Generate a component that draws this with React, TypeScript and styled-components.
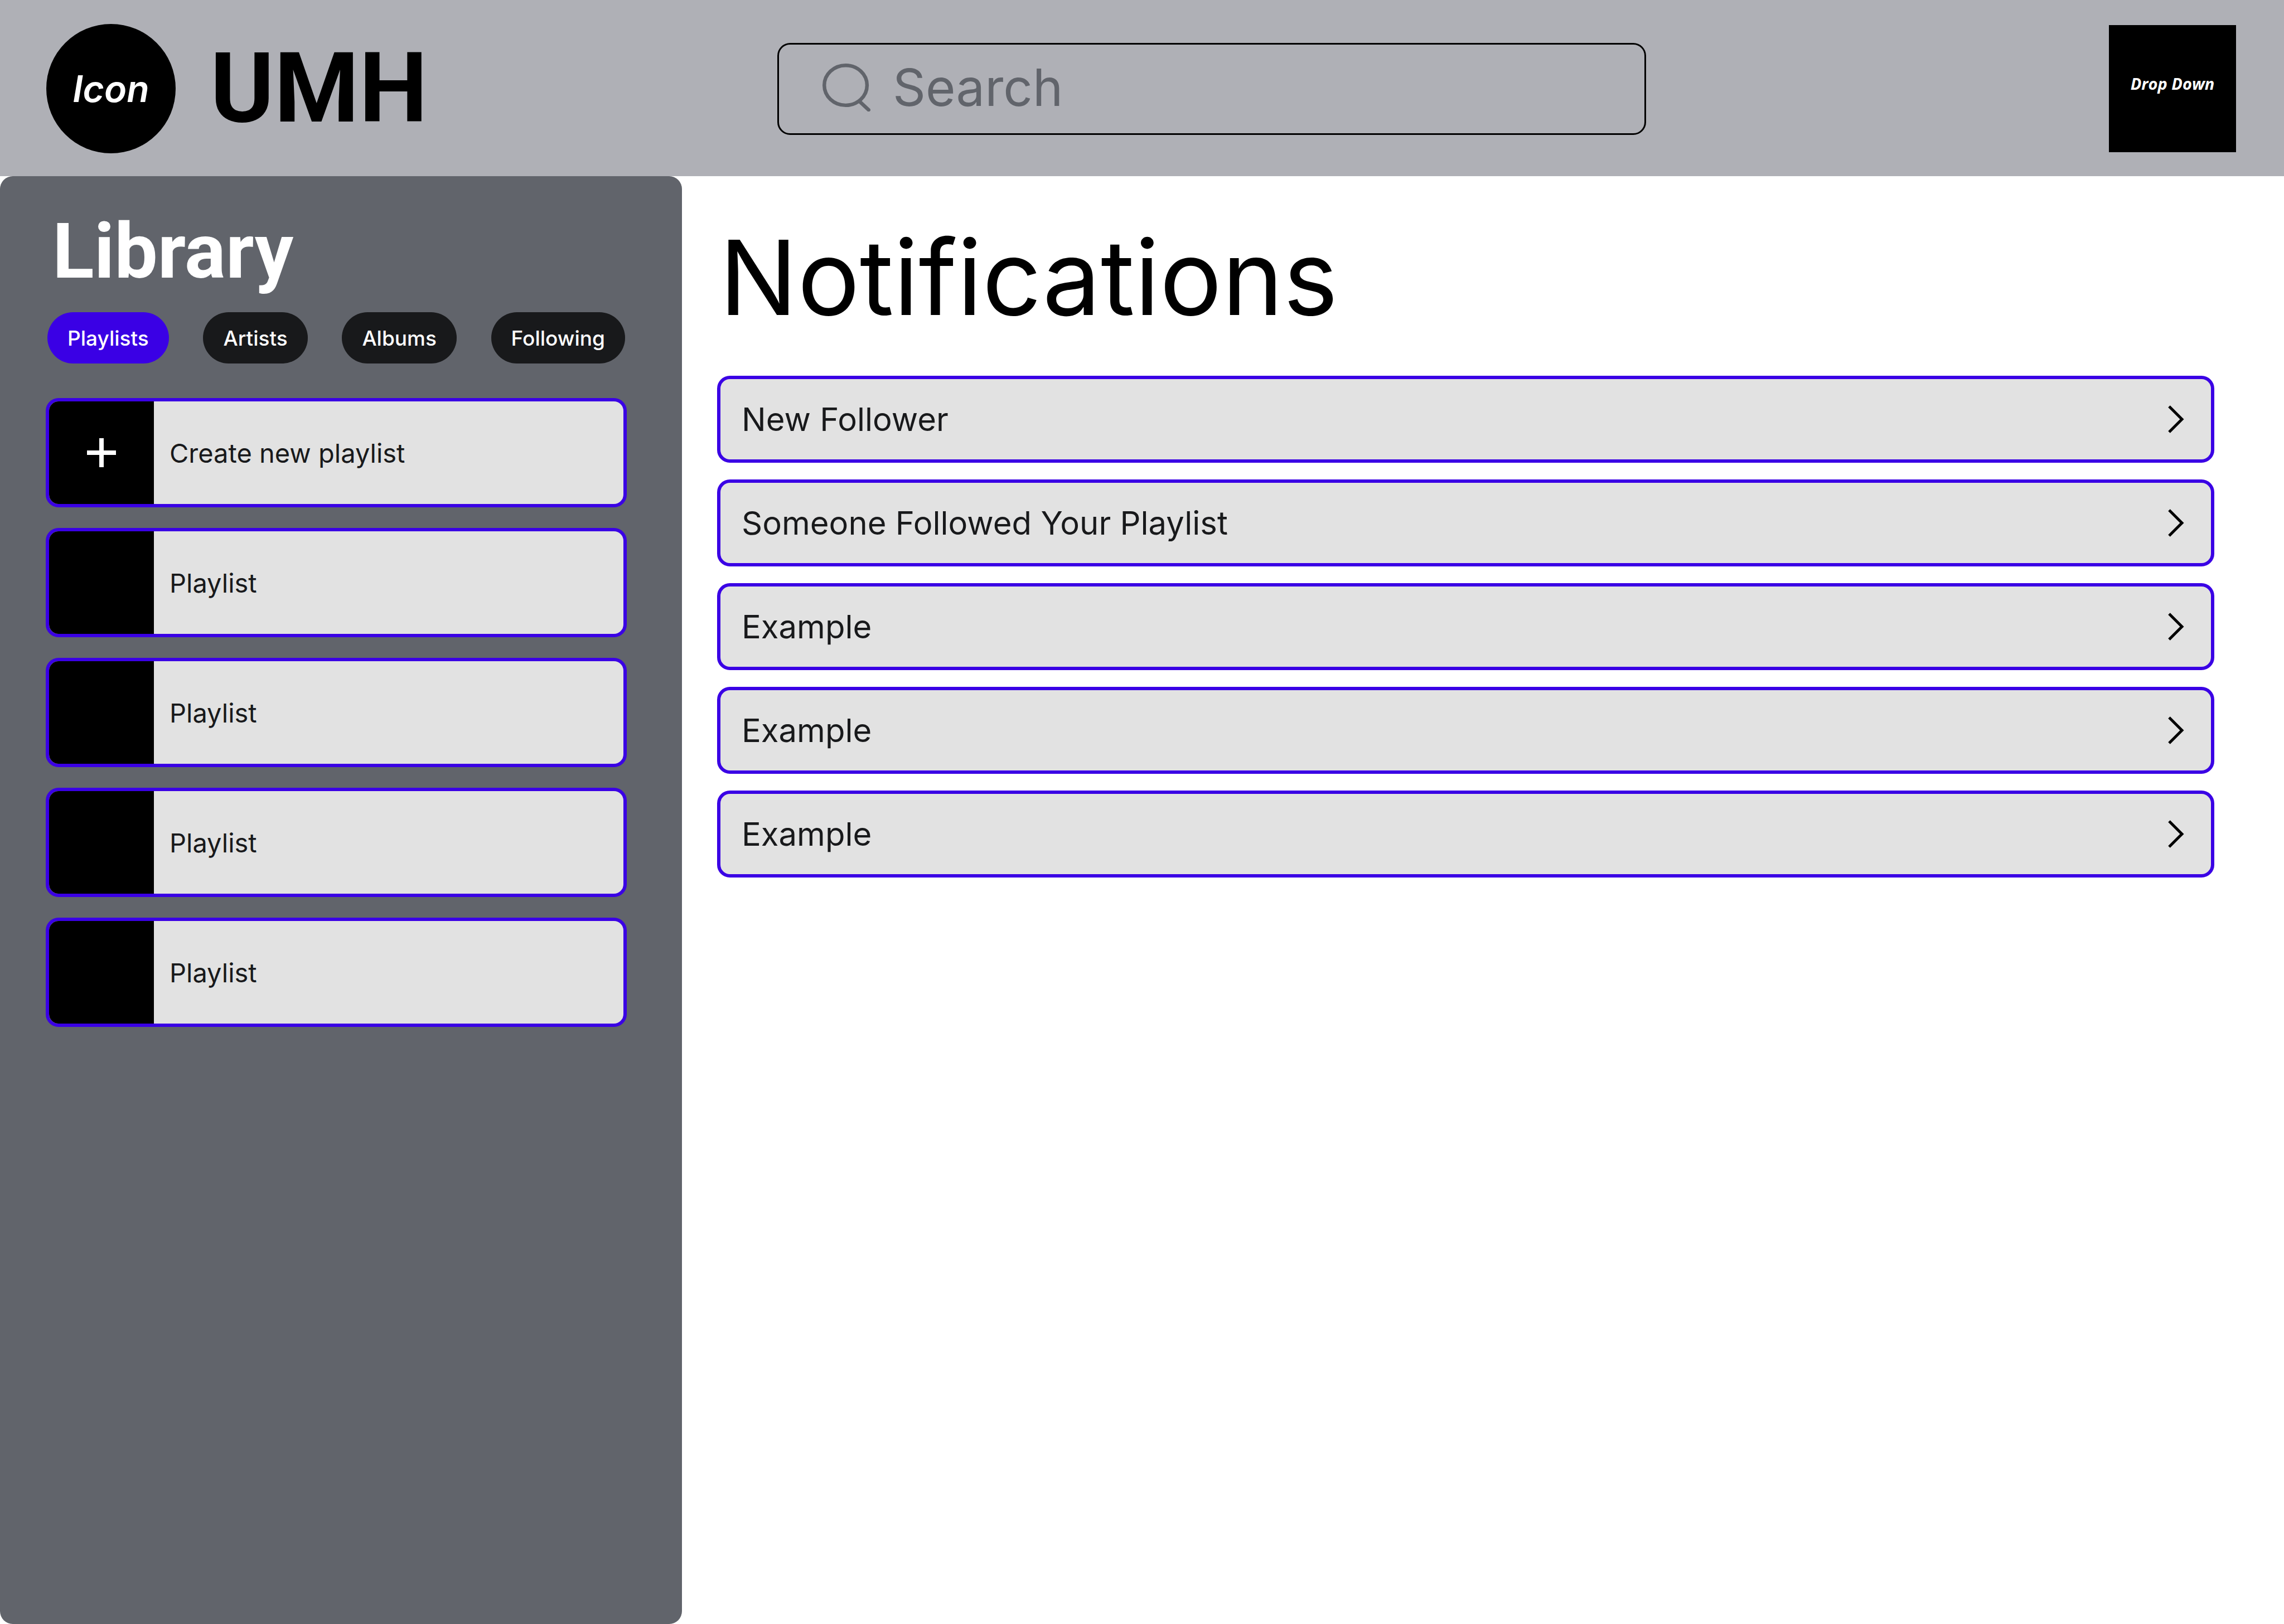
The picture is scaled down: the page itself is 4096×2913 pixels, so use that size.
import React, { useState } from "react";
import styled, { createGlobalStyle } from "styled-components";

const color = {
  header: "#afb0b6",
  panel: "#61646b",
  accent: "#3a00e5",
  ink: "#18191b",
  card: "#e2e2e2",
};

const radius = "23px";
const body = `Inter, "Noto Sans", sans-serif`;
const display = `Roboto, "Noto Sans", sans-serif`;

const GlobalStyle = createGlobalStyle`
  *, *::before, *::after {
    box-sizing: border-box;
  }
  body {
    margin: 0;
    background: #fff;
    font-family: ${body};
    color: ${color.ink};
  }
  button, input {
    font: inherit;
    color: inherit;
  }
  button {
    cursor: pointer;
  }
`;

const Page = styled.div`
  display: grid;
  grid-template-rows: auto 1fr;
  min-height: 100vh;
`;

const Header = styled.header`
  display: grid;
  grid-template-columns: minmax(0, 1311fr) minmax(0, 1558fr) minmax(0, 1058fr);
  align-items: center;
  padding: 43px 86px 41px 83px;
  background: ${color.header};
`;

const Brand = styled.a`
  display: flex;
  align-items: center;
  gap: 62px;
  color: #000;
  text-decoration: none;
`;

const BrandMark = styled.span`
  display: flex;
  flex: none;
  align-items: center;
  justify-content: center;
  width: 232px;
  height: 232px;
  border-radius: 50%;
  background: #000;
  color: #fff;
  font-size: 66px;
  font-style: italic;
  font-weight: 600;
`;

const BrandName = styled.span`
  font-family: ${display};
  font-size: 174px;
  font-weight: 700;
  line-height: 200px;
`;

const SearchField = styled.label`
  display: flex;
  align-items: center;
  gap: 40px;
  height: 165px;
  padding: 0 78px 4px;
  border: 3px solid #000;
  border-radius: ${radius};
  color: ${color.panel};
`;

const SearchGlyph = styled.svg`
  flex: none;
  width: 86px;
  height: 86px;
  fill: none;
  stroke: currentColor;
  stroke-width: 9;
  stroke-linecap: round;
`;

const SearchInput = styled.input`
  flex: 1;
  min-width: 0;
  padding: 0;
  border: 0;
  outline: 0;
  background: none;
  font-size: 92px;
  line-height: 120px;

  &::placeholder {
    color: ${color.panel};
    opacity: 1;
  }
`;

const MenuButton = styled.button`
  justify-self: end;
  width: 228px;
  height: 228px;
  padding: 0 0 20px;
  border: 0;
  background: #000;
  color: #fff;
  font-family: "Open Sans", sans-serif;
  font-size: 29px;
  font-style: italic;
  font-weight: 700;
  white-space: nowrap;
`;

const Columns = styled.div`
  display: grid;
  grid-template-columns: minmax(0, 1223fr) minmax(0, 2873fr);
`;

const Sidebar = styled.aside`
  padding: 55px 99px 55px 82px;
  border-radius: ${radius};
  background: ${color.panel};
`;

const SidebarTitle = styled.h2`
  margin: 0 0 29px;
  padding-left: 12px;
  color: #fff;
  font-family: ${display};
  font-size: 138px;
  font-weight: 700;
  line-height: 160px;
`;

const Chips = styled.div`
  display: flex;
  justify-content: space-between;
  margin-bottom: 62px;
  padding: 0 3px;
`;

const Chip = styled.button<{ $active: boolean }>`
  height: 92px;
  padding: 0 36px;
  border: 0;
  border-radius: 46px;
  background: ${({ $active }) => ($active ? color.accent : color.ink)};
  color: #fff;
  font-size: 37px;
  font-weight: 500;
`;

const List = styled.ul<{ $gap: number }>`
  display: flex;
  flex-direction: column;
  gap: ${({ $gap }) => $gap}px;
  margin: 0;
  padding: 0;
  list-style: none;
`;

const Card = styled.button`
  display: flex;
  align-items: center;
  width: 100%;
  padding: 0;
  border: 6px solid ${color.accent};
  border-radius: ${radius};
  background: ${color.card};
  text-align: left;
`;

const PlaylistCard = styled(Card)`
  gap: 28px;
  height: 196px;
  overflow: hidden;
  font-size: 47px;
`;

const Cover = styled.span`
  display: flex;
  flex: none;
  align-items: center;
  justify-content: center;
  width: 188px;
  height: 100%;
  background: #000;
`;

const PlusGlyph = styled.svg`
  width: 52px;
  height: 52px;
  stroke: #fff;
  stroke-width: 8;
`;

const Main = styled.main`
  padding: 70px 125px 70px 63px;
`;

const PageTitle = styled.h1`
  margin: 0 0 64px;
  padding-left: 4px;
  color: #000;
  font-size: 186px;
  font-weight: 400;
  line-height: 224px;
`;

const NotificationCard = styled(Card)`
  justify-content: space-between;
  height: 156px;
  padding: 0 48px 0 38px;
  font-size: 58px;
`;

const ChevronGlyph = styled.svg`
  flex: none;
  width: 29px;
  height: 50px;
  fill: none;
  stroke: #000;
  stroke-width: 5;
`;

const filters = ["Playlists", "Artists", "Albums", "Following"];
const playlists = ["Playlist", "Playlist", "Playlist", "Playlist"];
const notifications = [
  "New Follower",
  "Someone Followed Your Playlist",
  "Example",
  "Example",
  "Example",
];

export default function App() {
  const [filter, setFilter] = useState(filters[0]);

  return (
    <Page>
      <GlobalStyle />
      <Header>
        <Brand href="#">
          <BrandMark>Icon</BrandMark>
          <BrandName>UMH</BrandName>
        </Brand>
        <SearchField>
          <SearchGlyph viewBox="0 0 120 120" aria-hidden="true">
            <ellipse cx="58" cy="54.5" rx="53.5" ry="50" />
            <path d="M93 95 L115.5 116" />
          </SearchGlyph>
          <SearchInput type="search" placeholder="Search" aria-label="Search" />
        </SearchField>
        <MenuButton type="button" aria-haspopup="menu">
          Drop Down
        </MenuButton>
      </Header>

      <Columns>
        <Sidebar>
          <SidebarTitle>Library</SidebarTitle>
          <Chips>
            {filters.map((name) => (
              <Chip
                key={name}
                type="button"
                $active={name === filter}
                aria-pressed={name === filter}
                onClick={() => setFilter(name)}
              >
                {name}
              </Chip>
            ))}
          </Chips>
          <List $gap={37}>
            <li>
              <PlaylistCard type="button">
                <Cover>
                  <PlusGlyph viewBox="0 0 52 52" aria-hidden="true">
                    <path d="M26 0 V52 M0 26 H52" />
                  </PlusGlyph>
                </Cover>
                Create new playlist
              </PlaylistCard>
            </li>
            {playlists.map((name, index) => (
              <li key={index}>
                <PlaylistCard type="button">
                  <Cover />
                  {name}
                </PlaylistCard>
              </li>
            ))}
          </List>
        </Sidebar>

        <Main>
          <PageTitle>Notifications</PageTitle>
          <List $gap={30}>
            {notifications.map((text, index) => (
              <li key={index}>
                <NotificationCard type="button">
                  {text}
                  <ChevronGlyph viewBox="0 0 29 50" aria-hidden="true">
                    <path d="M2 2 L25 25 L2 48" />
                  </ChevronGlyph>
                </NotificationCard>
              </li>
            ))}
          </List>
        </Main>
      </Columns>
    </Page>
  );
}
